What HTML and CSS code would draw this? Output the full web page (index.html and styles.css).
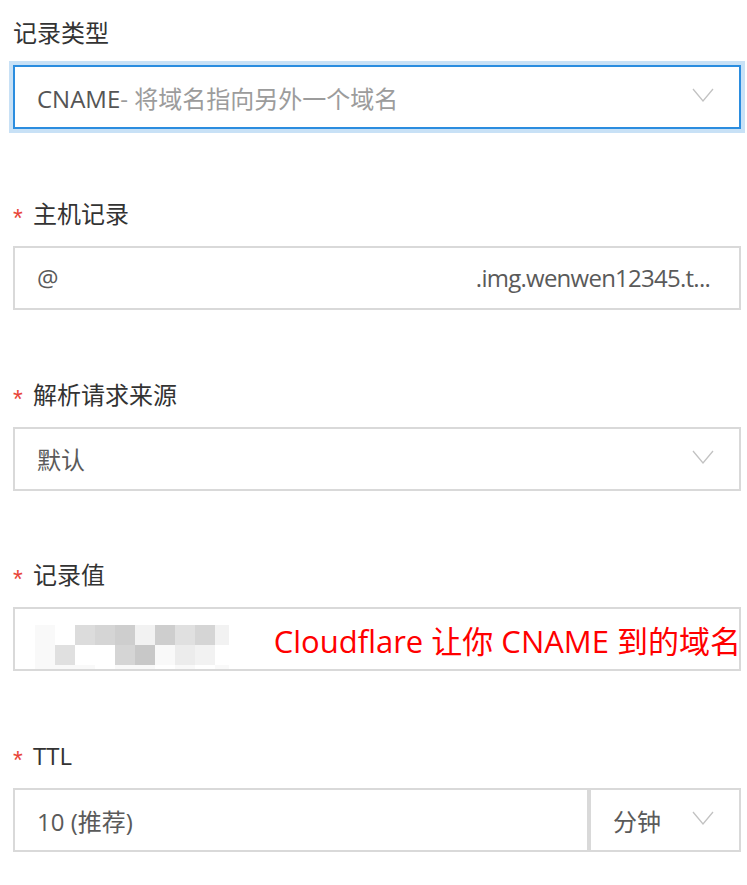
FILE: index.html
```html
<!DOCTYPE html>
<html lang="zh-CN">
<head>
<meta charset="utf-8">
<title>记录</title>
<link rel="stylesheet" href="styles.css">
</head>
<body>
<div class="form">
  <div class="field">
    <div class="label">记录类型</div>
    <div class="box box-focus">
      <span class="val"><span class="dark">CNAME</span><span class="muted">- 将域名指向另外一个域名</span></span>
      <svg class="chev" width="22" height="14" viewBox="0 0 22 14"><polyline points="1,1 11,13 21,1" fill="none" stroke="#c2c2c2" stroke-width="1.3"/></svg>
    </div>
  </div>

  <div class="field">
    <div class="label"><span class="req">*</span>主机记录</div>
    <div class="box">
      <span class="val">@</span>
      <span class="suffix">.img.wenwen12345.t...</span>
    </div>
  </div>

  <div class="field">
    <div class="label"><span class="req">*</span>解析请求来源</div>
    <div class="box">
      <span class="val">默认</span>
      <svg class="chev" width="22" height="14" viewBox="0 0 22 14"><polyline points="1,1 11,13 21,1" fill="none" stroke="#c2c2c2" stroke-width="1.3"/></svg>
    </div>
  </div>

  <div class="field">
    <div class="label"><span class="req">*</span>记录值</div>
    <div class="box box-value">
      <div class="mosaic">
        <span class="m1"></span><span class="m0"></span><span class="m5"></span><span class="m6"></span><span class="m7"></span><span class="m2"></span><span class="m7"></span><span class="m4"></span><span class="m6"></span><span class="m2"></span>
        <span class="m1"></span><span class="m4"></span><span class="m0"></span><span class="m0"></span><span class="m6"></span><span class="m8"></span><span class="m1"></span><span class="m3"></span><span class="m2"></span><span class="m0"></span>
        <span class="m1"></span><span class="m1"></span><span class="m1"></span><span class="m0"></span><span class="m1"></span><span class="m1"></span><span class="m0"></span><span class="m1"></span><span class="m0"></span><span class="m1"></span>
      </div>
      <span class="note">Cloudflare 让你 CNAME 到的域名</span>
    </div>
  </div>

  <div class="field">
    <div class="label"><span class="req">*</span>TTL</div>
    <div class="ttl">
      <div class="box box-ttl"><span class="val">10 (推荐)</span></div>
      <div class="box box-unit">
        <span class="val">分钟</span>
        <svg class="chev" width="22" height="14" viewBox="0 0 22 14"><polyline points="1,1 11,13 21,1" fill="none" stroke="#c2c2c2" stroke-width="1.3"/></svg>
      </div>
    </div>
  </div>
</div>
</body>
</html>
```

FILE: styles.css
```css
* { box-sizing: border-box; }
html, body { margin: 0; padding: 0; background: #fff; }
body {
  font-family: "Open Sans", "Noto Sans CJK SC", sans-serif;
  font-size: 24px;
  color: #333;
}
.form {
  width: 747px;
  padding: 17px 6px 0 13px;
  display: flex;
  flex-direction: column;
  gap: 68.75px;
}
.field { display: flex; flex-direction: column; gap: 16px; }
.label {
  height: 32px;
  line-height: 32px;
  color: #333;
  display: flex;
  align-items: center;
  white-space: nowrap;
}
.req {
  color: #e8463a;
  font-size: 25px;
  width: 20px;
  align-self: flex-start;
  line-height: 30px;
  margin-top: 5px;
  font-family: "Liberation Sans", sans-serif;
}
.box {
  height: 64px;
  width: 728px;
  border: 2px solid #d9d9d9;
  display: flex;
  align-items: center;
  padding: 0 25px 0 22px;
  white-space: nowrap;
  overflow: visible;
}
.box-focus {
  border-color: #2b8ddf;
  box-shadow: 0 0 0 4px #c8e1f6;
}
.val { color: #5a5a5a; }
.dark { color: #555; }
.muted { color: #9c9c9c; }
.chev { margin-left: auto; margin-top: -4px; }
.suffix { margin-left: auto; color: #5a5a5a; padding-right: 4px; letter-spacing: -0.75px; }

.box-value { padding: 0 0 0 20px; align-items: stretch; }
.mosaic {
  display: grid;
  grid-template-columns: repeat(9, 20px) 14px;
  grid-template-rows: 20px 20px 4px;
  align-self: flex-end;
}
.mosaic span { display: block; }
.m0 { background: #fff; }
.m1 { background: #f9f9f9; }
.m2 { background: #f2f2f2; }
.m3 { background: #ececec; }
.m4 { background: #e0e0e0; }
.m5 { background: #dcdcdc; }
.m6 { background: #d5d5d5; }
.m7 { background: #cecece; }
.m8 { background: #c8c8c8; }
.note {
  margin-left: auto;
  align-self: center;
  color: #ff0000;
  font-size: 31px;
  margin-right: -2px;
}

.ttl { display: flex; }
.box-ttl { width: 576px; }
.box-unit { width: 152px; padding: 0 25px 0 22px; }
```
